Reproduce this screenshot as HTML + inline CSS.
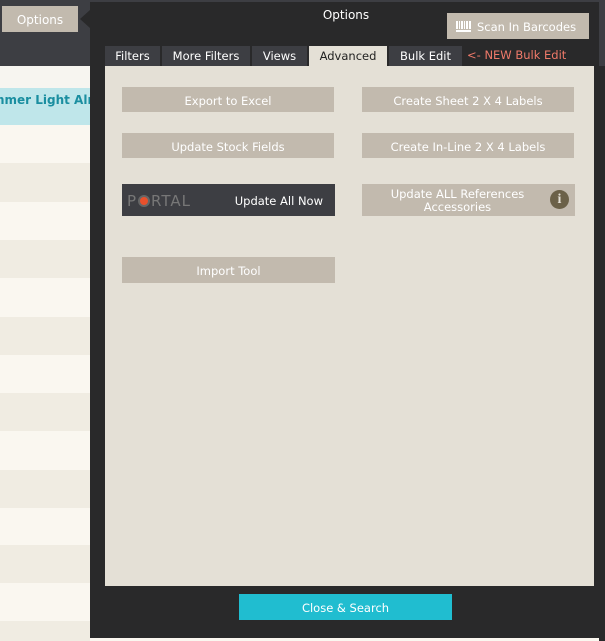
<!DOCTYPE html>
<html><head><meta charset="utf-8"><style>
*{margin:0;padding:0;box-sizing:border-box}
body{width:605px;height:641px;overflow:hidden;position:relative;background:#faf7f0;font-family:"DejaVu Sans","Liberation Sans",sans-serif;font-size:11px}
.a{position:absolute}
.btn{position:absolute;background:#c2baae;color:#fff;text-align:center;display:flex;align-items:center;justify-content:center;font-size:11.5px;padding-top:2px}
.tab{position:absolute;top:46px;height:20px;background:#3d3e43;color:#fff;text-align:center;line-height:21px;font-size:11.5px}
</style></head><body>
<div class="a" style="left:0;top:0;width:605px;height:66px;background:#3d3e43"></div>
<div class="a" style="left:0;top:66px;width:90px;height:22px;background:#f7f5f0"></div>
<div class="a" style="left:0;top:88px;width:90px;height:37px;background:#bfe6ea;color:#1a8ea0;font-weight:bold;font-size:12px;line-height:24px;white-space:nowrap;overflow:hidden"><span style="margin-left:-8px">mmer Light Aln</span></div>
<div class="a" style="left:0;top:163px;width:90px;height:39px;background:#f0ece2"></div>
<div class="a" style="left:0;top:240px;width:90px;height:38px;background:#f0ece2"></div>
<div class="a" style="left:0;top:317px;width:90px;height:38px;background:#f0ece2"></div>
<div class="a" style="left:0;top:393px;width:90px;height:38px;background:#f0ece2"></div>
<div class="a" style="left:0;top:470px;width:90px;height:38px;background:#f0ece2"></div>
<div class="a" style="left:0;top:545px;width:90px;height:38px;background:#f0ece2"></div>
<div class="a" style="left:0;top:621px;width:90px;height:20px;background:#f0ece2"></div>
<div class="btn" style="left:2px;top:6px;width:76px;height:26px;font-size:12px">Options</div>
<div class="a" style="left:80px;top:10px;width:0;height:0;border-top:9px solid transparent;border-bottom:9px solid transparent;border-right:10px solid #29292a"></div>
<div class="a" style="left:90px;top:2px;width:509px;height:636px;background:#29292a"></div>
<div class="a" style="left:599px;top:66px;width:6px;height:575px;background:#29292a"></div>
<div class="a" style="left:300px;top:8px;width:92px;text-align:center;color:#fff;font-size:12px">Options</div>
<div class="btn" style="left:447px;top:13px;width:142px;height:26px;font-size:11.5px;justify-content:flex-start;padding-left:9px">
<svg width="16" height="12" style="margin-right:5px"><g fill="#fff"><rect x="0" y="0" width="2" height="8"/><rect x="3" y="0" width="1" height="8"/><rect x="5" y="0" width="2" height="8"/><rect x="8" y="0" width="1" height="8"/><rect x="10" y="0" width="2" height="8"/><rect x="13" y="0" width="2" height="8"/><rect x="0" y="9" width="15" height="2"/></g></svg>Scan In Barcodes</div>
<div class="tab" style="left:105px;width:55px">Filters</div>
<div class="tab" style="left:162px;width:88px">More Filters</div>
<div class="tab" style="left:252px;width:55px">Views</div>
<div class="tab" style="left:309px;width:78px;background:#e4e0d6;color:#222">Advanced</div>
<div class="tab" style="left:389px;width:73px">Bulk Edit</div>
<div class="a" style="left:467px;top:48px;color:#f07a6a;font-size:11.5px">&lt;- NEW Bulk Edit</div>
<div class="a" style="left:105px;top:66px;width:489px;height:520px;background:#e4e0d6"></div>
<div class="btn" style="left:122px;top:87px;width:212px;height:25px">Export to Excel</div>
<div class="btn" style="left:362px;top:87px;width:212px;height:25px">Create Sheet 2 X 4 Labels</div>
<div class="btn" style="left:122px;top:133px;width:212px;height:25px">Update Stock Fields</div>
<div class="btn" style="left:362px;top:133px;width:212px;height:25px">Create In-Line 2 X 4 Labels</div>
<div class="btn" style="left:122px;top:184px;width:213px;height:32px;background:#3d3e43;justify-content:flex-start">
<span style="margin-left:5px;color:#777;font-size:15px;letter-spacing:1px;display:flex;align-items:center">P<span style="display:inline-block;width:12px;height:12px;border-radius:50%;border:2px solid #666;background:#e8502c;margin:0 1px"></span>RTAL</span>
<span style="margin-left:auto;margin-right:12px;font-size:11.5px">Update All Now</span></div>
<div class="btn" style="left:362px;top:184px;width:213px;height:32px;line-height:13px;padding-right:30px;padding-left:8px;padding-top:1px">Update ALL References<br>Accessories</div>
<div class="a" style="left:550px;top:190px;width:19px;height:19px;border-radius:50%;background:#6b6148;color:#e4e0d6;font-weight:bold;font-family:'Liberation Serif',serif;font-size:14px;text-align:center;line-height:19px">i</div>
<div class="btn" style="left:122px;top:257px;width:213px;height:26px">Import Tool</div>
<div class="btn" style="left:239px;top:594px;width:213px;height:26px;background:#20bdd0;font-size:11.5px">Close &amp; Search</div>
</body></html>
